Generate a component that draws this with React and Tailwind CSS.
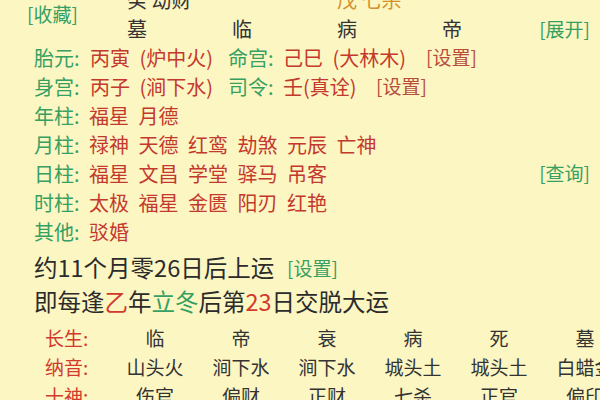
import React from 'react';

const font = { fontFamily: '"Noto Sans CJK SC", "Noto Sans", sans-serif' };

function Label({ children, className = '' }) {
  return <span className={`text-[#35a062] ${className}`}>{children}</span>;
}

function Red({ children, className = '' }) {
  return <span className={`text-[#c4392d] [word-spacing:5px] ${className}`}>{children}</span>;
}

function ShenshaRow({ label, items, right }) {
  return (
    <div className="flex h-[29px] items-center justify-between pr-[10px]">
      <div className="flex items-center">
        <Label className="w-[55px]">{label}:</Label>
        <Red>{items.join(' ')}</Red>
      </div>
      {right}
    </div>
  );
}

const table = [
  { label: '长生', values: ['临', '帝', '衰', '病', '死', '墓'] },
  { label: '纳音', values: ['山头火', '涧下水', '涧下水', '城头土', '城头土', '白蜡金'] },
  { label: '十神', values: ['伤官', '偏财', '正财', '七杀', '正官', '偏印'] },
];

export default function App() {
  return (
    <div className="w-[600px] h-[400px] overflow-hidden bg-[#fcf6c3] whitespace-nowrap" style={font}>
      <div className="-mt-[15px]">
        {/* header */}
        <div className="flex text-[20px] text-[#333]">
          <div className="w-[127px] flex items-center pl-[27px]">
            <Label className="text-[19px]">[收藏]</Label>
          </div>
          <div className="flex-1 pr-[10px]">
            <div className="grid grid-cols-[105px_105px_105px_1fr] h-[29px] items-center">
              <span>癸 劫财</span>
              <span></span>
              <span className="text-[#d4902c]">戊 七杀</span>
              <span></span>
            </div>
            <div className="grid grid-cols-[105px_105px_105px_1fr] h-[29px] items-center">
              <span>墓</span>
              <span>临</span>
              <span>病</span>
              <div className="flex justify-between items-center">
                <span>帝</span>
                <Label className="text-[19px]">[展开]</Label>
              </div>
            </div>
          </div>
        </div>

        {/* body */}
        <div className="pl-[34px] text-[20px]">
          <div className="flex h-[29px] items-center">
            <Label className="w-[56px]">胎元:</Label>
            <Red className="w-[138px]">丙寅 (炉中火)</Red>
            <Label className="w-[55px]">命宫:</Label>
            <Red className="w-[143px]">己巳 (大林木)</Red>
            <span className="text-[#b94c3d] text-[19px]">[设置]</span>
          </div>
          <div className="flex h-[29px] items-center">
            <Label className="w-[56px]">身宫:</Label>
            <Red className="w-[138px]">丙子 (涧下水)</Red>
            <Label className="w-[55px]">司令:</Label>
            <Red className="w-[93px]">壬(真诠)</Red>
            <span className="text-[#b94c3d] text-[19px]">[设置]</span>
          </div>
          <ShenshaRow label="年柱" items={['福星', '月德']} />
          <ShenshaRow label="月柱" items={['禄神', '天德', '红鸾', '劫煞', '元辰', '亡神']} />
          <ShenshaRow
            label="日柱"
            items={['福星', '文昌', '学堂', '驿马', '吊客']}
            right={<Label className="text-[19px]">[查询]</Label>}
          />
          <ShenshaRow label="时柱" items={['太极', '福星', '金匮', '阳刃', '红艳']} />
          <ShenshaRow label="其他" items={['驳婚']} />

          <div className="mt-[5px] h-[34px] flex items-center text-[23.5px] text-[#2b2b2b]">
            <span className="w-[253px]">约11个月零26日后上运</span>
            <Label className="text-[19px]">[设置]</Label>
          </div>
          <div className="h-[34px] flex items-center text-[23.5px] text-[#2b2b2b]">
            即每逢<span className="text-[#d23a2e]">乙</span>年
            <span className="text-[#35a062]">立冬</span>后第
            <span className="text-[#d23a2e]">23</span>日交脱大运
          </div>
        </div>

        {/* table */}
        <div className="mt-[5px] pl-[45px] text-[19px] text-[#333]">
          {table.map((row) => (
            <div key={row.label} className="flex h-[29px] items-center">
              <span className="w-[67px] shrink-0 text-[#d23a2e]">{row.label}:</span>
              {row.values.map((v, i) => (
                <span key={i} className="w-[86px] shrink-0 text-center">
                  {v}
                </span>
              ))}
            </div>
          ))}
        </div>
      </div>
    </div>
  );
}
